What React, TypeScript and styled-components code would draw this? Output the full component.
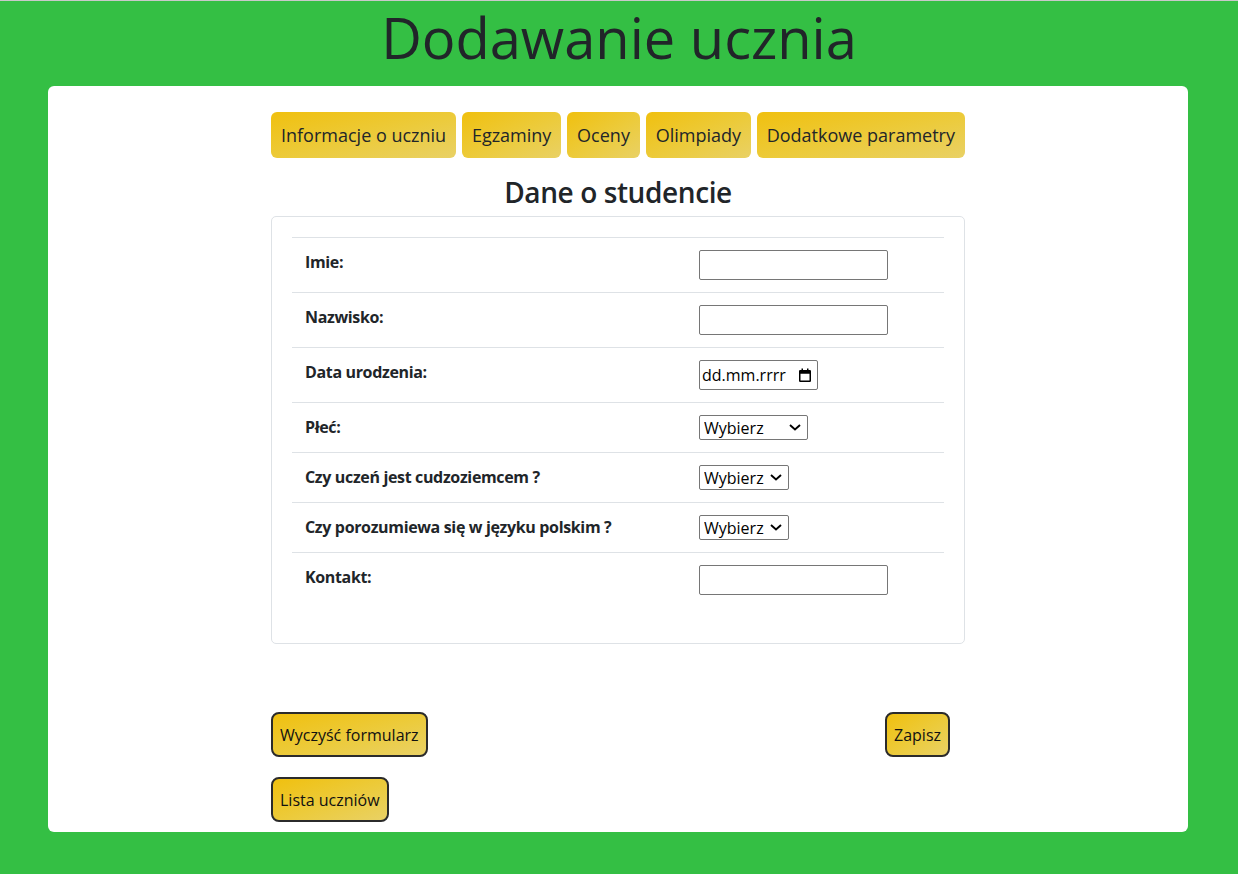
import React from "react";
import styled, { createGlobalStyle } from "styled-components";

const GlobalStyle = createGlobalStyle`
  html, body { margin: 0; padding: 0; }
  body {
    background: #34bf44;
    font-family: "Open Sans", "Noto Sans", sans-serif;
    color: #212529;
  }
  * { box-sizing: border-box; }
`;

const yellow = "linear-gradient(to bottom right, #f0c00f 0%, #eccb3c 55%, #e9d165 100%)";

const Page = styled.div`
  min-height: 874px;
  border-top: 1px solid #c9c9c9;
  display: flex;
  flex-direction: column;
`;

const Title = styled.h1`
  margin: 3px 0 15px;
  font-size: 56px;
  line-height: 67px;
  font-weight: 400;
  text-align: center;
  color: #212529;
`;

const Sheet = styled.main`
  width: 1140px;
  margin: 0 0 0 48px;
  background: #fff;
  border-radius: 6px;
  padding: 26px 0 10px;
`;

const Column = styled.div`
  width: 694px;
  margin: 0 auto;
`;

const Tabs = styled.nav`
  display: flex;
  gap: 4px;
  justify-content: space-between;
`;

const Tab = styled.button`
  height: 46px;
  padding: 0 10px;
  border: none;
  border-radius: 6px;
  background: ${yellow};
  font-family: inherit;
  font-size: 18px;
  color: #212529;
  cursor: pointer;
  white-space: nowrap;
`;

const Heading = styled.h3`
  margin: 17px 0 7px;
  font-size: 28px;
  line-height: 34px;
  font-weight: 600;
  letter-spacing: -0.4px;
  text-align: center;
`;

const Card = styled.section`
  border: 1px solid #dee2e6;
  border-radius: 5px;
  padding: 20px 20px 36px;
`;

const Row = styled.div`
  display: grid;
  grid-template-columns: 394px 1fr;
  border-top: 1px solid #dee2e6;
`;

const Cell = styled.div`
  padding: 12px 13px;
  display: flex;
  align-items: flex-start;
`;

const Label = styled.label`
  font-size: 16px;
  line-height: 24px;
  font-weight: 700;
  letter-spacing: -0.35px;
`;

const TextInput = styled.input`
  width: 189px;
  height: 30px;
  border: 1px solid #767676;
  border-radius: 2px;
  background: #fff;
  padding: 1px 2px;
  font-family: inherit;
  font-size: 16px;
`;

const DateBox = styled.div`
  width: 119px;
  height: 30px;
  border: 1px solid #767676;
  border-radius: 2px;
  display: flex;
  align-items: center;
  justify-content: space-between;
  padding: 0 6px 0 2px;
  font-size: 16px;
  color: #000;
`;

const SelectWrap = styled.div`
  position: relative;
  display: inline-block;
`;

const Select = styled.select<{ $w: number }>`
  appearance: none;
  width: ${(p) => p.$w}px;
  height: 25px;
  border: 1px solid #767676;
  border-radius: 2px;
  background: #fff;
  padding: 0 0 0 4px;
  font-family: inherit;
  font-size: 16px;
  color: #000;
`;

const Chevron = styled.svg`
  position: absolute;
  right: 7px;
  top: 9px;
  pointer-events: none;
`;

const ButtonRow = styled.div`
  display: flex;
  justify-content: space-between;
  padding-right: 15px;
  margin-top: 68px;
`;

const ActionButton = styled.button`
  height: 45px;
  padding: 0 7px;
  border: 2px solid #2b2b2b;
  border-radius: 8px;
  background: ${yellow};
  font-family: inherit;
  font-size: 16px;
  color: #111;
  cursor: pointer;
`;

const SecondRow = styled.div`
  margin-top: 20px;
`;

const CalendarIcon = () => (
  <svg width="12" height="14" viewBox="0 0 12 14">
    <rect x="0.75" y="2.75" width="10.5" height="10.5" fill="none" stroke="#000" strokeWidth="1.5" rx="0.5" />
    <rect x="0.75" y="2.75" width="10.5" height="3" fill="#000" />
    <rect x="2.5" y="0.5" width="1.5" height="3" fill="#000" />
    <rect x="8" y="0.5" width="1.5" height="3" fill="#000" />
  </svg>
);

const Dropdown = ({ w }: { w: number }) => (
  <SelectWrap>
    <Select $w={w} defaultValue="">
      <option value="">Wybierz</option>
    </Select>
    <Chevron width="12" height="7" viewBox="0 0 12 7">
      <path d="M1 1 L6 5.5 L11 1" fill="none" stroke="#000" strokeWidth="1.9" />
    </Chevron>
  </SelectWrap>
);

const fields: { label: string; control: React.ReactNode }[] = [
  { label: "Imie:", control: <TextInput type="text" /> },
  { label: "Nazwisko:", control: <TextInput type="text" /> },
  {
    label: "Data urodzenia:",
    control: (
      <DateBox>
        <span>dd.mm.rrrr</span>
        <CalendarIcon />
      </DateBox>
    ),
  },
  { label: "Płeć:", control: <Dropdown w={109} /> },
  { label: "Czy uczeń jest cudzoziemcem ?", control: <Dropdown w={90} /> },
  { label: "Czy porozumiewa się w języku polskim ?", control: <Dropdown w={90} /> },
  { label: "Kontakt:", control: <TextInput type="text" /> },
];

export default function App() {
  return (
    <>
      <GlobalStyle />
      <Page>
        <Title>Dodawanie ucznia</Title>
        <Sheet>
          <Column>
            <Tabs>
              <Tab>Informacje o uczniu</Tab>
              <Tab>Egzaminy</Tab>
              <Tab>Oceny</Tab>
              <Tab>Olimpiady</Tab>
              <Tab>Dodatkowe parametry</Tab>
            </Tabs>
            <Heading>Dane o studencie</Heading>
            <Card>
              {fields.map((f) => (
                <Row key={f.label}>
                  <Cell>
                    <Label>{f.label}</Label>
                  </Cell>
                  <Cell>{f.control}</Cell>
                </Row>
              ))}
            </Card>
            <ButtonRow>
              <ActionButton>Wyczyść formularz</ActionButton>
              <ActionButton>Zapisz</ActionButton>
            </ButtonRow>
            <SecondRow>
              <ActionButton>Lista uczniów</ActionButton>
            </SecondRow>
          </Column>
        </Sheet>
      </Page>
    </>
  );
}
